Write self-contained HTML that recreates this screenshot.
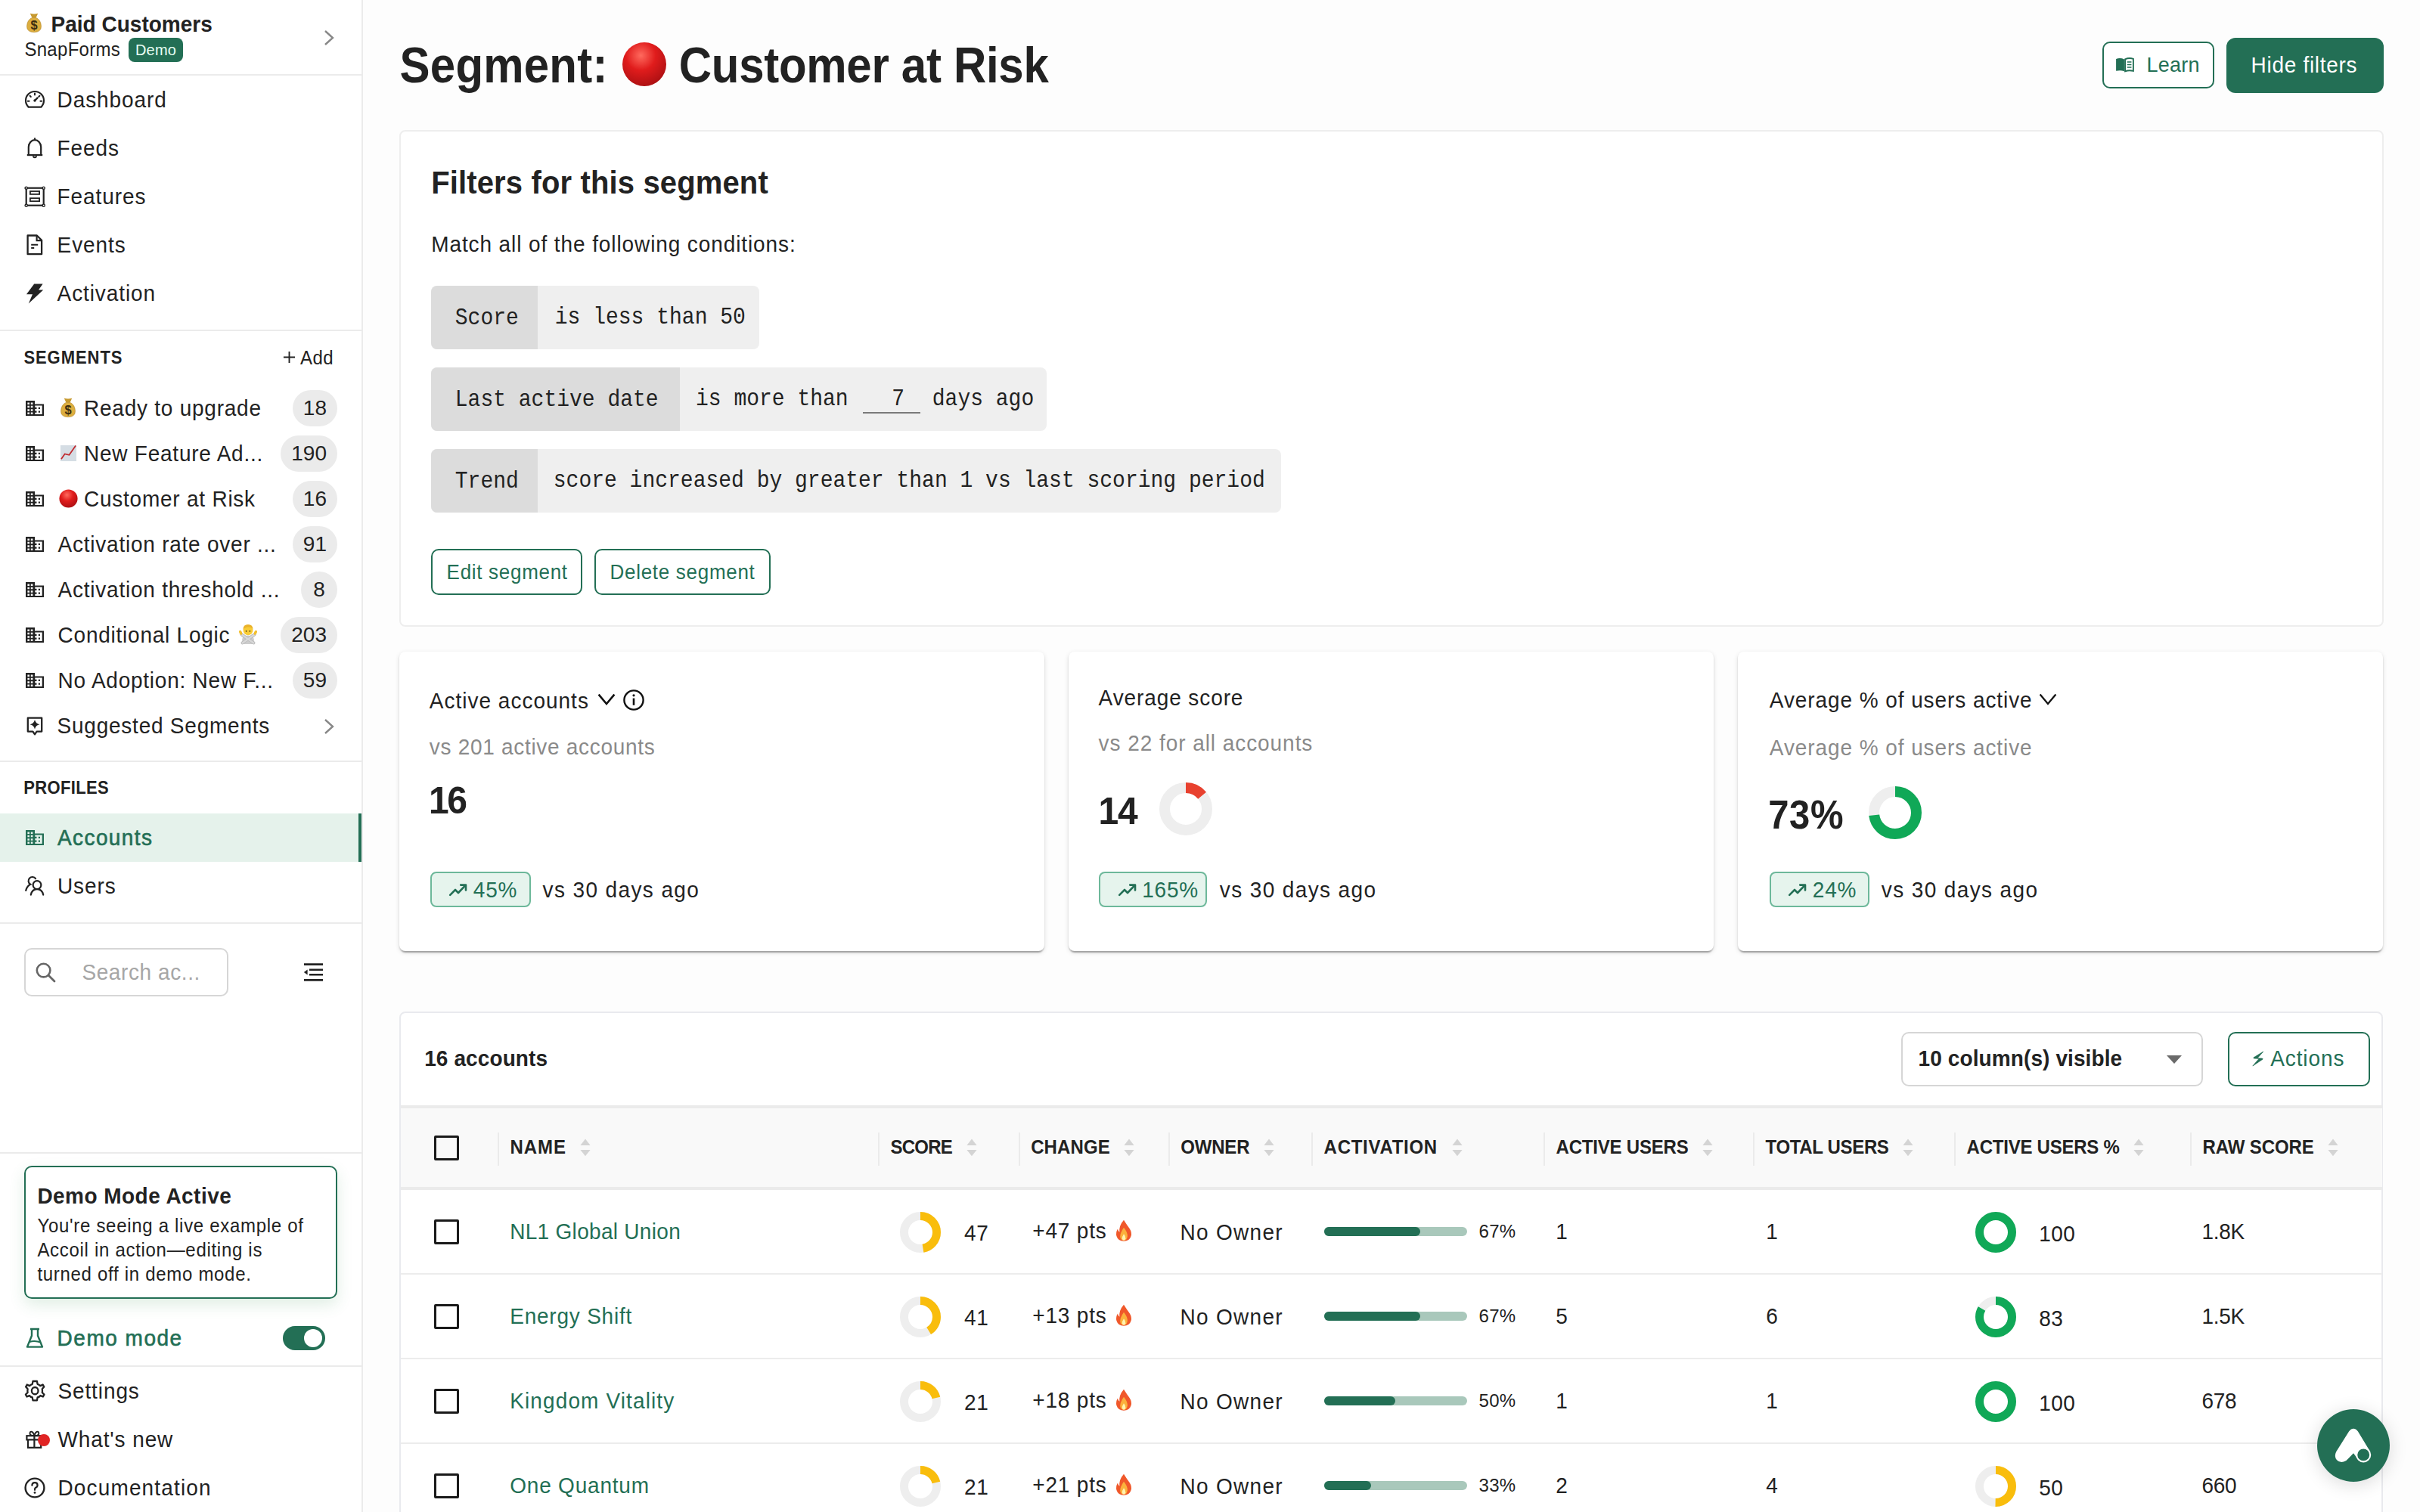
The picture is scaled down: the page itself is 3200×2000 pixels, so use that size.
<!DOCTYPE html>
<html><head><meta charset="utf-8"><title>Segment: Customer at Risk</title>
<style>
*{box-sizing:border-box;margin:0;padding:0}
html{zoom:2}
@media (max-width:2000px){html{zoom:1}}
body{width:1600px;height:1000px;overflow:hidden;position:relative;background:#fdfdfd;font-family:"Liberation Sans",sans-serif;color:#222;}
.t{position:absolute;white-space:nowrap;transform:scaleY(1.05);transform-origin:0 52%}
.b{position:absolute}
.i{position:absolute;overflow:visible}
.mono{font-family:"Liberation Mono",monospace}
</style></head>
<body>
<div class="b" style="left:0;top:0;width:240px;height:1000px;background:#fff;border-right:1px solid #ebebeb"></div>
<svg class="i" style="left:17.6px;top:8.6px;width:10px;height:13px;" viewBox="0 0 10 13"><path d="M2.4 0.4 Q5 1.2 7.6 0.4 L6.3 3.3 H3.7 Z" fill="#c79a30"/><path d="M3.7 3.2 Q0.5 4.6 0.3 8.8 Q0.1 12.7 5 12.8 Q9.9 12.7 9.7 8.8 Q9.5 4.6 6.3 3.2 Z" fill="#dcae3f"/><path d="M3.7 3.2 Q0.5 4.6 0.3 8.8 Q0.1 12.7 5 12.8 Q9.9 12.7 9.7 8.8 Q9.5 4.6 6.3 3.2 Z" fill="none" stroke="#b8892a" stroke-width=".35"/><text x="5" y="10.9" font-size="8.2" text-anchor="middle" font-family="Liberation Sans" font-weight="700" fill="#3b2c10">$</text></svg>
<div class="t" style="left:33.8px;top:6.50px;font-size:14px;line-height:20px;height:20px;font-weight:700;">Paid Customers</div>
<div class="t" style="left:16.2px;top:23.20px;font-size:12px;line-height:20px;height:20px;letter-spacing:0.15px;">SnapForms</div>
<div class="b" style="left:85px;top:25px;width:36px;height:16px;border-radius:4px;background:#236f55;color:#e8fff4;font-size:10px;line-height:16px;text-align:center;letter-spacing:0.1px">Demo</div>
<svg class="i" style="left:214px;top:19.5px;width:7px;height:11px;" viewBox="0 0 7 11"><path d="M1 1l5 4.5L1 10" fill="none" stroke="#888" stroke-width="1.2"/></svg>
<div class="b" style="left:0px;top:49px;width:239px;height:1px;background:#ebebeb"></div>
<svg class="i" style="left:16px;top:59.5px;width:14px;height:13px;" viewBox="0 0 14 13"><path d="M2.82 11.3 A6 6 0 1 1 11.18 11.3 Z" fill="none" stroke="#222" stroke-width="1.1" stroke-linejoin="round"/><path d="M7 7 L8.7 5.3" stroke="#222" stroke-width="1.2" stroke-linecap="round"/><circle cx="7" cy="7" r=".85" fill="#222"/><path d="M7 2.3 V3.2 M3.8 3.9 L4.4 4.5 M10.2 3.9 L9.6 4.5 M2.4 7.4 H3.3 M11.6 7.4 H10.7" stroke="#222" stroke-width="1" stroke-linecap="round"/></svg>
<div class="t" style="left:37.8px;top:56.60px;font-size:14px;line-height:20px;height:20px;letter-spacing:0.45px;">Dashboard</div>
<svg class="i" style="left:16px;top:91px;width:14px;height:14px;" viewBox="0 0 14 14"><path d="M2.9 11.5 V6.3 A4.1 4.7 0 0 1 11.1 6.3 V11.5" fill="none" stroke="#222" stroke-width="1.1"/><path d="M1.9 11.55 H12.1" stroke="#222" stroke-width="1.1"/><path d="M6 12.1 A1 1 0 0 0 8 12.1" fill="none" stroke="#222" stroke-width="1"/><path d="M7 0.2 V1.8" stroke="#222" stroke-width="1.1"/></svg>
<div class="t" style="left:37.8px;top:88.60px;font-size:14px;line-height:20px;height:20px;letter-spacing:0.45px;">Feeds</div>
<svg class="i" style="left:16px;top:123px;width:14px;height:14px;" viewBox="0 0 14 14"><rect x="1.35" y="1.35" width="11.5" height="11.5" fill="none" stroke="#222" stroke-width="1.1"/><rect x="3.95" y="3.5" width="6.1" height="1.95" fill="none" stroke="#222" stroke-width=".9"/><rect x="3.95" y="8.1" width="6.1" height="2" fill="none" stroke="#222" stroke-width=".9"/><g fill="#fff" stroke="#222" stroke-width=".7"><circle cx="1.35" cy="1.35" r=".8"/><circle cx="12.85" cy="1.35" r=".8"/><circle cx="1.35" cy="12.85" r=".8"/><circle cx="12.85" cy="12.85" r=".8"/></g></svg>
<div class="t" style="left:37.8px;top:120.60px;font-size:14px;line-height:20px;height:20px;letter-spacing:0.45px;">Features</div>
<svg class="i" style="left:16px;top:155px;width:14px;height:14px;" viewBox="0 0 14 14"><path d="M2.3 0.75 H8.4 L11.55 3.9 V13.1 H2.3 Z" fill="none" stroke="#222" stroke-width="1.15" stroke-linejoin="round"/><path d="M8.3 0.9 V4.05 H11.4" fill="none" stroke="#222" stroke-width="1.05"/><path d="M4.6 6.9 H9.1 M4.6 9.05 H6.6" stroke="#222" stroke-width="1.0"/></svg>
<div class="t" style="left:37.8px;top:152.60px;font-size:14px;line-height:20px;height:20px;letter-spacing:0.45px;">Events</div>
<svg class="i" style="left:16px;top:187px;width:14px;height:14px;" viewBox="0 0 14 14"><path d="M6.6 0.75 H12.3 L9.5 4.7 H12.6 L2.9 13.7 L5.5 7.6 H1.5 Z" fill="#222"/></svg>
<div class="t" style="left:37.8px;top:184.60px;font-size:14px;line-height:20px;height:20px;letter-spacing:0.45px;">Activation</div>
<div class="b" style="left:0px;top:218px;width:239px;height:1px;background:#ebebeb"></div>
<div class="t" style="left:15.7px;top:227.00px;font-size:11px;line-height:20px;height:20px;font-weight:700;letter-spacing:0.47px;">SEGMENTS</div>
<svg class="i" style="left:187px;top:232px;width:8.5px;height:8.5px;" viewBox="0 0 9 9"><path d="M4.5 0.5V8.5M0.5 4.5H8.5" stroke="#222" stroke-width="1"/></svg>
<div class="t" style="left:198.5px;top:227.00px;font-size:12px;line-height:20px;height:20px;letter-spacing:0.2px;">Add</div>
<svg class="i" style="left:17px;top:265px;width:12px;height:10px;" viewBox="0 0 12 10"><path d="M0 0h6v2.2h6V10H0z M1.2 1.2h1.3v1.25h-1.3z M1.2 3.4h1.3v1.25h-1.3z M1.2 5.6h1.3v1.25h-1.3z M1.2 7.8h1.3v1.25h-1.3z M3.4 1.2h1.3v1.25h-1.3z M3.4 3.4h1.3v1.25h-1.3z M3.4 5.6h1.3v1.25h-1.3z M3.4 7.8h1.3v1.25h-1.3z M6.15 3.2V9h4.7V3.2z M6.15 4.4h1.1v1.1h-1.1z M6.15 6.8h1.1v1.1h-1.1z M8.4 4.4h1.1v1.1h-1.1z M8.4 6.8h1.1v1.1h-1.1z " fill="#222" fill-rule="evenodd"/></svg>
<svg class="i" style="left:40px;top:262.8px;width:10px;height:13px;" viewBox="0 0 10 13"><path d="M2.4 0.4 Q5 1.2 7.6 0.4 L6.3 3.3 H3.7 Z" fill="#c79a30"/><path d="M3.7 3.2 Q0.5 4.6 0.3 8.8 Q0.1 12.7 5 12.8 Q9.9 12.7 9.7 8.8 Q9.5 4.6 6.3 3.2 Z" fill="#dcae3f"/><path d="M3.7 3.2 Q0.5 4.6 0.3 8.8 Q0.1 12.7 5 12.8 Q9.9 12.7 9.7 8.8 Q9.5 4.6 6.3 3.2 Z" fill="none" stroke="#b8892a" stroke-width=".35"/><text x="5" y="10.9" font-size="8.2" text-anchor="middle" font-family="Liberation Sans" font-weight="700" fill="#3b2c10">$</text></svg>
<div class="t" style="left:55.5px;top:260.60px;font-size:14px;line-height:20px;height:20px;letter-spacing:0.38px;">Ready to upgrade</div>
<div class="b" style="right:1377px;top:258px;height:24px;min-width:24px;padding:0 7px;border-radius:12px;background:#ebebeb;font-size:14px;line-height:24px;text-align:center;color:#222">18</div>
<svg class="i" style="left:17px;top:295px;width:12px;height:10px;" viewBox="0 0 12 10"><path d="M0 0h6v2.2h6V10H0z M1.2 1.2h1.3v1.25h-1.3z M1.2 3.4h1.3v1.25h-1.3z M1.2 5.6h1.3v1.25h-1.3z M1.2 7.8h1.3v1.25h-1.3z M3.4 1.2h1.3v1.25h-1.3z M3.4 3.4h1.3v1.25h-1.3z M3.4 5.6h1.3v1.25h-1.3z M3.4 7.8h1.3v1.25h-1.3z M6.15 3.2V9h4.7V3.2z M6.15 4.4h1.1v1.1h-1.1z M6.15 6.8h1.1v1.1h-1.1z M8.4 4.4h1.1v1.1h-1.1z M8.4 6.8h1.1v1.1h-1.1z " fill="#222" fill-rule="evenodd"/></svg>
<svg class="i" style="left:39.5px;top:294px;width:11.5px;height:11.5px;" viewBox="0 0 12 12"><rect x="0.5" y="0.5" width="11" height="11" fill="#d5dde4"/><path d="M1 10 L3.5 6.5 L6.5 7.2 L11 0.8" fill="none" stroke="#c0282d" stroke-width="0.9"/></svg>
<div class="t" style="left:55.5px;top:290.60px;font-size:14px;line-height:20px;height:20px;letter-spacing:0.38px;">New Feature Ad...</div>
<div class="b" style="right:1377px;top:288px;height:24px;min-width:24px;padding:0 7px;border-radius:12px;background:#ebebeb;font-size:14px;line-height:24px;text-align:center;color:#222">190</div>
<svg class="i" style="left:17px;top:325px;width:12px;height:10px;" viewBox="0 0 12 10"><path d="M0 0h6v2.2h6V10H0z M1.2 1.2h1.3v1.25h-1.3z M1.2 3.4h1.3v1.25h-1.3z M1.2 5.6h1.3v1.25h-1.3z M1.2 7.8h1.3v1.25h-1.3z M3.4 1.2h1.3v1.25h-1.3z M3.4 3.4h1.3v1.25h-1.3z M3.4 5.6h1.3v1.25h-1.3z M3.4 7.8h1.3v1.25h-1.3z M6.15 3.2V9h4.7V3.2z M6.15 4.4h1.1v1.1h-1.1z M6.15 6.8h1.1v1.1h-1.1z M8.4 4.4h1.1v1.1h-1.1z M8.4 6.8h1.1v1.1h-1.1z " fill="#222" fill-rule="evenodd"/></svg>
<svg class="i" style="left:39px;top:323.5px;width:12.5px;height:12.5px;" viewBox="0 0 12 12"><defs><radialGradient id="rs" cx="0.42" cy="0.3" r="0.75"><stop offset="0" stop-color="#ff6a5e"/><stop offset="0.45" stop-color="#e01c1c"/><stop offset="1" stop-color="#a80f12"/></radialGradient></defs><circle cx="6" cy="6" r="5.8" fill="url(#rs)"/></svg>
<div class="t" style="left:55.5px;top:320.60px;font-size:14px;line-height:20px;height:20px;letter-spacing:0.38px;">Customer at Risk</div>
<div class="b" style="right:1377px;top:318px;height:24px;min-width:24px;padding:0 7px;border-radius:12px;background:#ebebeb;font-size:14px;line-height:24px;text-align:center;color:#222">16</div>
<svg class="i" style="left:17px;top:355px;width:12px;height:10px;" viewBox="0 0 12 10"><path d="M0 0h6v2.2h6V10H0z M1.2 1.2h1.3v1.25h-1.3z M1.2 3.4h1.3v1.25h-1.3z M1.2 5.6h1.3v1.25h-1.3z M1.2 7.8h1.3v1.25h-1.3z M3.4 1.2h1.3v1.25h-1.3z M3.4 3.4h1.3v1.25h-1.3z M3.4 5.6h1.3v1.25h-1.3z M3.4 7.8h1.3v1.25h-1.3z M6.15 3.2V9h4.7V3.2z M6.15 4.4h1.1v1.1h-1.1z M6.15 6.8h1.1v1.1h-1.1z M8.4 4.4h1.1v1.1h-1.1z M8.4 6.8h1.1v1.1h-1.1z " fill="#222" fill-rule="evenodd"/></svg>
<div class="t" style="left:38.3px;top:350.60px;font-size:14px;line-height:20px;height:20px;letter-spacing:0.38px;">Activation rate over ...</div>
<div class="b" style="right:1377px;top:348px;height:24px;min-width:24px;padding:0 7px;border-radius:12px;background:#ebebeb;font-size:14px;line-height:24px;text-align:center;color:#222">91</div>
<svg class="i" style="left:17px;top:385px;width:12px;height:10px;" viewBox="0 0 12 10"><path d="M0 0h6v2.2h6V10H0z M1.2 1.2h1.3v1.25h-1.3z M1.2 3.4h1.3v1.25h-1.3z M1.2 5.6h1.3v1.25h-1.3z M1.2 7.8h1.3v1.25h-1.3z M3.4 1.2h1.3v1.25h-1.3z M3.4 3.4h1.3v1.25h-1.3z M3.4 5.6h1.3v1.25h-1.3z M3.4 7.8h1.3v1.25h-1.3z M6.15 3.2V9h4.7V3.2z M6.15 4.4h1.1v1.1h-1.1z M6.15 6.8h1.1v1.1h-1.1z M8.4 4.4h1.1v1.1h-1.1z M8.4 6.8h1.1v1.1h-1.1z " fill="#222" fill-rule="evenodd"/></svg>
<div class="t" style="left:38.3px;top:380.60px;font-size:14px;line-height:20px;height:20px;letter-spacing:0.38px;">Activation threshold ...</div>
<div class="b" style="right:1377px;top:378px;height:24px;min-width:24px;padding:0 7px;border-radius:12px;background:#ebebeb;font-size:14px;line-height:24px;text-align:center;color:#222">8</div>
<svg class="i" style="left:17px;top:415px;width:12px;height:10px;" viewBox="0 0 12 10"><path d="M0 0h6v2.2h6V10H0z M1.2 1.2h1.3v1.25h-1.3z M1.2 3.4h1.3v1.25h-1.3z M1.2 5.6h1.3v1.25h-1.3z M1.2 7.8h1.3v1.25h-1.3z M3.4 1.2h1.3v1.25h-1.3z M3.4 3.4h1.3v1.25h-1.3z M3.4 5.6h1.3v1.25h-1.3z M3.4 7.8h1.3v1.25h-1.3z M6.15 3.2V9h4.7V3.2z M6.15 4.4h1.1v1.1h-1.1z M6.15 6.8h1.1v1.1h-1.1z M8.4 4.4h1.1v1.1h-1.1z M8.4 6.8h1.1v1.1h-1.1z " fill="#222" fill-rule="evenodd"/></svg>
<div class="t" style="left:38.3px;top:410.60px;font-size:14px;line-height:20px;height:20px;letter-spacing:0.38px;">Conditional Logic</div>
<svg class="i" style="left:157.5px;top:412.2px;width:13px;height:14px;" viewBox="0 0 13 14"><path d="M2.6 14 V10.8 Q2.8 8.5 6.5 8.3 Q10.2 8.5 10.4 10.8 V14 Z" fill="#cdcdcd"/><path d="M2.2 7.6 L10.2 13.2 M10.8 7.6 L2.8 13.2" stroke="#b9b9b9" stroke-width="2.1" stroke-linecap="round"/><path d="M2.2 7.6 L10.2 13.2 M10.8 7.6 L2.8 13.2" stroke="#d8d8d8" stroke-width="1.2" stroke-linecap="round"/><ellipse cx="1.6" cy="6.4" rx=".9" ry="1.6" transform="rotate(-25 1.6 6.4)" fill="#f3bf2c"/><ellipse cx="11.4" cy="6.4" rx=".9" ry="1.6" transform="rotate(25 11.4 6.4)" fill="#f3bf2c"/><circle cx="6.5" cy="4.9" r="3.2" fill="#f8cc36"/><path d="M3.2 4.6 Q3.2 1 6.5 1 Q9.8 1 9.8 4.6 Q9 2.6 6.8 2.8 Q4.4 2.6 3.2 4.6z" fill="#eab22a"/><circle cx="5.3" cy="5.4" r=".42" fill="#3a2a10"/><circle cx="7.7" cy="5.4" r=".42" fill="#3a2a10"/></svg>
<div class="b" style="right:1377px;top:408px;height:24px;min-width:24px;padding:0 7px;border-radius:12px;background:#ebebeb;font-size:14px;line-height:24px;text-align:center;color:#222">203</div>
<svg class="i" style="left:17px;top:445px;width:12px;height:10px;" viewBox="0 0 12 10"><path d="M0 0h6v2.2h6V10H0z M1.2 1.2h1.3v1.25h-1.3z M1.2 3.4h1.3v1.25h-1.3z M1.2 5.6h1.3v1.25h-1.3z M1.2 7.8h1.3v1.25h-1.3z M3.4 1.2h1.3v1.25h-1.3z M3.4 3.4h1.3v1.25h-1.3z M3.4 5.6h1.3v1.25h-1.3z M3.4 7.8h1.3v1.25h-1.3z M6.15 3.2V9h4.7V3.2z M6.15 4.4h1.1v1.1h-1.1z M6.15 6.8h1.1v1.1h-1.1z M8.4 4.4h1.1v1.1h-1.1z M8.4 6.8h1.1v1.1h-1.1z " fill="#222" fill-rule="evenodd"/></svg>
<div class="t" style="left:38.3px;top:440.60px;font-size:14px;line-height:20px;height:20px;letter-spacing:0.38px;">No Adoption: New F...</div>
<div class="b" style="right:1377px;top:438px;height:24px;min-width:24px;padding:0 7px;border-radius:12px;background:#ebebeb;font-size:14px;line-height:24px;text-align:center;color:#222">59</div>
<svg class="i" style="left:17px;top:473.5px;width:12px;height:13px;" viewBox="0 0 12 13"><path d="M1.4 1.35 H10.6 V10.3 H7.3 L6 12.2 L4.7 10.3 H1.4 Z" fill="none" stroke="#222" stroke-width="1.15" stroke-linejoin="round"/><path d="M6 2.45 Q6.55 5.05 9.25 5.6 Q6.55 6.15 6 8.75 Q5.45 6.15 2.75 5.6 Q5.45 5.05 6 2.45z" fill="#222"/></svg>
<div class="t" style="left:37.8px;top:470.60px;font-size:14px;line-height:20px;height:20px;letter-spacing:0.38px;">Suggested Segments</div>
<svg class="i" style="left:214px;top:475px;width:7px;height:11px;" viewBox="0 0 7 11"><path d="M1 1l5 4.5L1 10" fill="none" stroke="#888" stroke-width="1.2"/></svg>
<div class="b" style="left:0px;top:503px;width:239px;height:1px;background:#ebebeb"></div>
<div class="t" style="left:15.6px;top:511.70px;font-size:11px;line-height:20px;height:20px;font-weight:700;letter-spacing:0.18px;">PROFILES</div>
<div class="b" style="left:0px;top:538px;width:237px;height:32px;background:#e5f2eb"></div>
<div class="b" style="left:237px;top:538px;width:2px;height:32px;background:#236f55"></div>
<svg class="i" style="left:17px;top:549px;width:12px;height:10px;" viewBox="0 0 12 10"><path d="M0 0h6v2.2h6V10H0z M1.2 1.2h1.3v1.25h-1.3z M1.2 3.4h1.3v1.25h-1.3z M1.2 5.6h1.3v1.25h-1.3z M1.2 7.8h1.3v1.25h-1.3z M3.4 1.2h1.3v1.25h-1.3z M3.4 3.4h1.3v1.25h-1.3z M3.4 5.6h1.3v1.25h-1.3z M3.4 7.8h1.3v1.25h-1.3z M6.15 3.2V9h4.7V3.2z M6.15 4.4h1.1v1.1h-1.1z M6.15 6.8h1.1v1.1h-1.1z M8.4 4.4h1.1v1.1h-1.1z M8.4 6.8h1.1v1.1h-1.1z " fill="#236f55" fill-rule="evenodd"/></svg>
<div class="t" style="left:38.0px;top:544.60px;font-size:14px;line-height:20px;height:20px;color:#236f55;letter-spacing:0.7px;-webkit-text-stroke:0.3px #236f55;">Accounts</div>
<svg class="i" style="left:16px;top:579px;width:14px;height:14px;" viewBox="0 0 14 14"><circle cx="8.5" cy="6.3" r="2.7" fill="none" stroke="#222" stroke-width="1.1"/><path d="M4.4 12.8 Q5.2 9.1 8.5 9.1 Q11.8 9.1 12.6 12.8" fill="none" stroke="#222" stroke-width="1.1" stroke-linecap="round"/><path d="M7.53 2.11 A2.6 2.6 0 1 0 4.1 5.85 Q1.8 7 1.1 10" fill="none" stroke="#222" stroke-width="1.1" stroke-linecap="round"/></svg>
<div class="t" style="left:38.0px;top:576.60px;font-size:14px;line-height:20px;height:20px;letter-spacing:0.45px;">Users</div>
<div class="b" style="left:0px;top:610px;width:239px;height:1px;background:#ebebeb"></div>
<div class="b" style="left:16px;top:627px;width:135px;height:32px;border:1px solid #d6d6d6;border-radius:5px;background:#fff"></div>
<svg class="i" style="left:23px;top:636px;width:14px;height:14px;" viewBox="0 0 14 14"><circle cx="5.8" cy="5.8" r="4.4" fill="none" stroke="#666" stroke-width="1.3"/><path d="M9 9 L13 13" stroke="#666" stroke-width="1.4" stroke-linecap="round"/></svg>
<div class="t" style="left:54.2px;top:633.60px;font-size:14px;line-height:20px;height:20px;color:#a6a6a6;letter-spacing:0.3px;">Search ac...</div>
<svg class="i" style="left:200.5px;top:637px;width:13px;height:12px;" viewBox="0 0 13 12"><path d="M0.5 0.8H13M4 4.4H13M4 7.6H13M0.5 11.2H13" stroke="#222" stroke-width="1.3"/><path d="M0.4 6 L2.8 4.3 V7.7Z" fill="#222"/></svg>
<div class="b" style="left:0px;top:762px;width:239px;height:1px;background:#ebebeb"></div>
<div class="b" style="left:16px;top:771px;width:207px;height:88px;border:1px solid #236f55;border-radius:5px;background:#fff;box-shadow:0 4px 10px rgba(60,150,90,0.16)"></div>
<div class="t" style="left:24.7px;top:781.60px;font-size:14px;line-height:20px;height:20px;font-weight:700;letter-spacing:0.23px;">Demo Mode Active</div>
<div class="t" style="left:24.7px;top:801.10px;font-size:12px;line-height:20px;height:20px;letter-spacing:0.35px;">You're seeing a live example of</div>
<div class="t" style="left:24.7px;top:817.10px;font-size:12px;line-height:20px;height:20px;letter-spacing:0.35px;">Accoil in action—editing is</div>
<div class="t" style="left:24.7px;top:832.80px;font-size:12px;line-height:20px;height:20px;letter-spacing:0.35px;">turned off in demo mode.</div>
<svg class="i" style="left:17px;top:878px;width:12px;height:14px;" viewBox="0 0 12 14"><path d="M4 1 V5.4 L1 12.8 H11 L8 5.4 V1 M3 1 H9" fill="none" stroke="#236f55" stroke-width="1.2" stroke-linejoin="round"/><path d="M2.2 9.6 Q6 8.2 9.8 9.8" fill="none" stroke="#236f55" stroke-width="1"/></svg>
<div class="t" style="left:37.8px;top:875.60px;font-size:14px;line-height:20px;height:20px;color:#236f55;letter-spacing:0.75px;-webkit-text-stroke:0.3px #236f55;">Demo mode</div>
<div class="b" style="left:187px;top:877px;width:28px;height:16px;border-radius:8px;background:#236f55"></div>
<div class="b" style="left:201px;top:879px;width:12px;height:12px;border-radius:6px;background:#fff"></div>
<div class="b" style="left:0px;top:903px;width:239px;height:1px;background:#ebebeb"></div>
<svg class="i" style="left:16.5px;top:913px;width:13.2px;height:13.8px" viewBox="1.2 0.5 11.6 11.3" preserveAspectRatio="none"><path d="M7 0.9 L8.2 0.9 L8.5 2.5 Q9.4 2.8 10.1 3.4 L11.6 2.8 L12.3 3.9 L11.2 5.1 Q11.4 6 11.2 7 L12.4 8.1 L11.7 9.3 L10.2 8.7 Q9.5 9.4 8.5 9.7 L8.2 11.3 H5.8 L5.5 9.7 Q4.5 9.4 3.8 8.7 L2.3 9.3 L1.6 8.1 L2.8 7 Q2.6 6 2.8 5.1 L1.7 3.9 L2.4 2.8 L3.9 3.4 Q4.6 2.8 5.5 2.5 L5.8 0.9 Z" fill="none" stroke="#222" stroke-width="1.0" stroke-linejoin="round"/><circle cx="7" cy="6.1" r="1.9" fill="none" stroke="#222" stroke-width="1.0"/></svg>
<div class="t" style="left:38.2px;top:910.60px;font-size:14px;line-height:20px;height:20px;letter-spacing:0.45px;">Settings</div>
<svg class="i" style="left:16.5px;top:945px;width:14px;height:13px;" viewBox="0 0 14 13"><rect x="1.2" y="4.6" width="10" height="2.6" fill="none" stroke="#222" stroke-width="1.1"/><path d="M2 7.2 V12.4 H10.6 V7.2 M6.2 4.6 V12.4" fill="none" stroke="#222" stroke-width="1.1"/><path d="M6.2 4.5 C3.6 4.6 3 3.6 3.3 2.6 C3.6 1.4 5.4 1.4 6.2 4.5 C7 1.4 8.8 1.4 9.1 2.6 C9.4 3.6 8.8 4.6 6.2 4.5" fill="none" stroke="#222" stroke-width="1"/></svg>
<div class="b" style="left:25px;top:948.5px;width:8px;height:8px;border-radius:4px;background:#e02424"></div>
<div class="t" style="left:38.2px;top:942.60px;font-size:14px;line-height:20px;height:20px;letter-spacing:0.45px;">What's new</div>
<svg class="i" style="left:16px;top:977px;width:14px;height:14px;" viewBox="0 0 14 14"><circle cx="7" cy="7" r="6.2" fill="none" stroke="#222" stroke-width="1.2"/><path d="M5.2 5.4 Q5.2 3.6 7 3.6 Q8.8 3.6 8.8 5.2 Q8.8 6.4 7.4 7 Q7 7.2 7 8.4" fill="none" stroke="#222" stroke-width="1.1" stroke-linecap="round"/><circle cx="7" cy="10.2" r=".7" fill="#222"/></svg>
<div class="t" style="left:38.2px;top:974.60px;font-size:14px;line-height:20px;height:20px;letter-spacing:0.58px;">Documentation</div>

<div class="t" style="left:264.3px;top:33.60px;font-size:30px;line-height:20px;height:20px;font-weight:700;letter-spacing:0.1px;transform:scaleY(1.1);transform-origin:0 50%;">Segment:</div>
<svg class="i" style="left:411px;top:27.6px;width:30px;height:30px;" viewBox="0 0 12 12"><defs><radialGradient id="rt" cx="0.42" cy="0.3" r="0.75"><stop offset="0" stop-color="#ff6a5e"/><stop offset="0.45" stop-color="#e01c1c"/><stop offset="1" stop-color="#a80f12"/></radialGradient></defs><circle cx="6" cy="6" r="5.8" fill="url(#rt)"/></svg>
<div class="t" style="left:448.9px;top:33.60px;font-size:30px;line-height:20px;height:20px;font-weight:700;letter-spacing:-0.15px;transform:scaleY(1.1);transform-origin:0 50%;">Customer at Risk</div>
<div class="b" style="left:1390px;top:27.6px;width:74px;height:31px;border:1px solid #236f55;border-radius:5px;background:#fff"></div>
<svg class="i" style="left:1398.5px;top:38px;width:12.5px;height:9.5px;" viewBox="0 0 13 10"><path d="M0.5 1 Q3.5 0 6.2 1.3 V9.6 Q3.5 8.6 0.5 9.4 Z" fill="#236f55"/><path d="M6.8 1.3 Q9.5 0 12.5 1 V9.4 Q9.5 8.6 6.8 9.6 Z" fill="none" stroke="#236f55" stroke-width="1"/><path d="M8.2 3.2 H11.2 M8.2 5 H11.2 M8.2 6.8 H11.2" stroke="#236f55" stroke-width=".8"/></svg>
<div class="t" style="left:1419.3px;top:33.20px;font-size:13.5px;line-height:20px;height:20px;color:#236f55;letter-spacing:0.1px;">Learn</div>
<div class="b" style="left:1472px;top:25px;width:104px;height:36.5px;border-radius:6px;background:#236f55"></div>
<div class="t" style="left:1488.3px;top:33.40px;font-size:14px;line-height:20px;height:20px;color:#fff;letter-spacing:0.35px;">Hide filters</div>
<div class="b" style="left:264px;top:86px;width:1312px;height:328.5px;border:1px solid #eeeeee;border-radius:4px;background:#fff"></div>
<div class="t" style="left:285.1px;top:110.70px;font-size:20px;line-height:20px;height:20px;font-weight:700;letter-spacing:0.07px;">Filters for this segment</div>
<div class="t" style="left:285.1px;top:152.10px;font-size:14px;line-height:20px;height:20px;letter-spacing:0.45px;">Match all of the following conditions:</div>
<div class="b" style="left:285px;top:189px;width:217px;height:42px;border-radius:4px;background:#efefef;overflow:hidden"><div class="b" style="left:0;top:0;width:70.6px;height:42px;background:#dcdcdc"></div></div>
<div class="t" style="left:300.9px;top:200.50px;font-size:14px;line-height:20px;height:20px;font-family:'Liberation Mono',monospace;transform:scaleY(1.13);transform-origin:0 55%;">Score</div>
<div class="t" style="left:366.90000000000003px;top:200.00px;font-size:14px;line-height:20px;height:20px;font-family:'Liberation Mono',monospace;transform:scaleY(1.13);transform-origin:0 55%;">is less than 50</div>
<div class="b" style="left:285px;top:243px;width:407px;height:42px;border-radius:4px;background:#efefef;overflow:hidden"><div class="b" style="left:0;top:0;width:164.6px;height:42px;background:#dcdcdc"></div></div>
<div class="t" style="left:300.9px;top:254.50px;font-size:14px;line-height:20px;height:20px;font-family:'Liberation Mono',monospace;transform:scaleY(1.13);transform-origin:0 55%;">Last active date</div>
<div class="t" style="left:460.0px;top:254.00px;font-size:14px;line-height:20px;height:20px;font-family:'Liberation Mono',monospace;transform:scaleY(1.13);transform-origin:0 55%;">is more than</div>
<div class="t" style="left:616.4px;top:254.00px;font-size:14px;line-height:20px;height:20px;font-family:'Liberation Mono',monospace;transform:scaleY(1.13);transform-origin:0 55%;">days ago</div>
<div class="b" style="left:285px;top:297px;width:562px;height:42px;border-radius:4px;background:#efefef;overflow:hidden"><div class="b" style="left:0;top:0;width:70.6px;height:42px;background:#dcdcdc"></div></div>
<div class="t" style="left:300.9px;top:308.50px;font-size:14px;line-height:20px;height:20px;font-family:'Liberation Mono',monospace;transform:scaleY(1.13);transform-origin:0 55%;">Trend</div>
<div class="t" style="left:365.90000000000003px;top:308.00px;font-size:14px;line-height:20px;height:20px;font-family:'Liberation Mono',monospace;transform:scaleY(1.13);transform-origin:0 55%;">score increased by greater than 1 vs last scoring period</div>
<div class="b" style="left:570.5px;top:272.7px;width:38px;height:1px;background:#7a7a7a"></div>
<div class="t" style="left:589.6px;top:254.00px;font-size:14px;line-height:20px;height:20px;font-family:'Liberation Mono',monospace;transform:scaleY(1.13);transform-origin:0 55%;">7</div>
<div class="b" style="left:285px;top:363px;width:100px;height:30.5px;border:1px solid #236f55;border-radius:5px"></div>
<div class="t" style="left:295.3px;top:368.70px;font-size:13px;line-height:20px;height:20px;color:#236f55;letter-spacing:0.35px;">Edit segment</div>
<div class="b" style="left:393px;top:363px;width:116.5px;height:30.5px;border:1px solid #236f55;border-radius:5px"></div>
<div class="t" style="left:403.3px;top:368.70px;font-size:13px;line-height:20px;height:20px;color:#236f55;letter-spacing:0.35px;">Delete segment</div>
<div class="b" style="left:264px;top:431px;width:426.5px;height:198px;border-radius:4px;background:#fff;box-shadow:0px 2px 1px -1px rgba(0,0,0,0.2),0px 1px 1px 0px rgba(0,0,0,0.14),0px 1px 3px 0px rgba(0,0,0,0.12)"></div>
<div class="b" style="left:706.3px;top:431px;width:426.5px;height:198px;border-radius:4px;background:#fff;box-shadow:0px 2px 1px -1px rgba(0,0,0,0.2),0px 1px 1px 0px rgba(0,0,0,0.14),0px 1px 3px 0px rgba(0,0,0,0.12)"></div>
<div class="b" style="left:1149px;top:431px;width:426.5px;height:198px;border-radius:4px;background:#fff;box-shadow:0px 2px 1px -1px rgba(0,0,0,0.2),0px 1px 1px 0px rgba(0,0,0,0.14),0px 1px 3px 0px rgba(0,0,0,0.12)"></div>
<div class="t" style="left:283.9px;top:453.80px;font-size:14px;line-height:20px;height:20px;letter-spacing:0.5px;">Active accounts</div>
<svg class="i" style="left:395px;top:458.5px;width:12px;height:8px;" viewBox="0 0 12 8"><path d="M0.8 0.8 L6 7 L11.2 0.8" fill="none" stroke="#111" stroke-width="1.3"/></svg>
<svg class="i" style="left:412px;top:456px;width:14px;height:14px;" viewBox="0 0 14 14"><circle cx="7" cy="7" r="6.3" fill="none" stroke="#111" stroke-width="1.2"/><path d="M7 5.8 V10.4" stroke="#111" stroke-width="1.3"/><circle cx="7" cy="3.9" r=".8" fill="#111"/></svg>
<div class="t" style="left:283.9px;top:484.60px;font-size:14px;line-height:20px;height:20px;color:#8a8a8a;letter-spacing:0.35px;">vs 201 active accounts</div>
<div class="t" style="left:283.5px;top:514.60px;font-size:24px;line-height:30px;height:30px;font-weight:700;letter-spacing:-1.2px;transform:scaleY(1.06);transform-origin:0 50%;">16</div>
<div class="t" style="left:726.3px;top:452.00px;font-size:14px;line-height:20px;height:20px;letter-spacing:0.45px;">Average score</div>
<div class="t" style="left:726.3px;top:481.90px;font-size:14px;line-height:20px;height:20px;color:#8a8a8a;letter-spacing:0.47px;">vs 22 for all accounts</div>
<div class="t" style="left:726.3px;top:521.70px;font-size:24px;line-height:30px;height:30px;font-weight:700;letter-spacing:-0.6px;transform:scaleY(1.06);transform-origin:0 50%;">14</div>
<svg class="i" style="left:766.7px;top:517.7px;width:35px;height:35px;" viewBox="0 0 35 35"><circle cx="17.5" cy="17.5" r="14.0" fill="none" stroke="#eeeeee" stroke-width="7"/><circle cx="17.5" cy="17.5" r="14.0" fill="none" stroke="#e8412f" stroke-width="7" stroke-dasharray="12.315 87.965" transform="rotate(-90 17.5 17.5)"/></svg>
<div class="t" style="left:1169.9px;top:453.70px;font-size:14px;line-height:20px;height:20px;letter-spacing:0.46px;">Average % of users active</div>
<svg class="i" style="left:1348px;top:458.5px;width:12px;height:8px;" viewBox="0 0 12 8"><path d="M0.8 0.8 L6 7 L11.2 0.8" fill="none" stroke="#111" stroke-width="1.15"/></svg>
<div class="t" style="left:1169.9px;top:484.80px;font-size:14px;line-height:20px;height:20px;color:#8a8a8a;letter-spacing:0.46px;">Average % of users active</div>
<div class="t" style="left:1169.1px;top:524.00px;font-size:24.5px;line-height:30px;height:30px;font-weight:700;letter-spacing:0.3px;transform:scaleY(1.08);transform-origin:0 50%;">73%</div>
<svg class="i" style="left:1235.7px;top:520px;width:35px;height:35px;" viewBox="0 0 35 35"><circle cx="17.5" cy="17.5" r="14.0" fill="none" stroke="#eeeeee" stroke-width="7"/><circle cx="17.5" cy="17.5" r="14.0" fill="none" stroke="#10a857" stroke-width="7" stroke-dasharray="64.214 87.965" transform="rotate(-90 17.5 17.5)"/></svg>
<div class="b" style="left:284.4px;top:576.6px;width:66.5px;height:23.6px;border:1px solid #6db89a;border-radius:4px;background:#e6f4ed"></div>
<svg class="i" style="left:297.2px;top:584.5px;width:12px;height:8px;" viewBox="0 0 12 8"><path d="M0.6 7.4 L4 4 L6 6 L10.6 1.2" fill="none" stroke="#236f55" stroke-width="1.3" stroke-linecap="round" stroke-linejoin="round"/><path d="M7.6 0.8 H11 V4.2" fill="none" stroke="#236f55" stroke-width="1.3" stroke-linecap="round" stroke-linejoin="round"/></svg>
<div class="t" style="left:312.9px;top:579.20px;font-size:14px;line-height:20px;height:20px;color:#236f55;letter-spacing:0.4px;">45%</div>
<div class="t" style="left:358.8px;top:579.20px;font-size:14px;line-height:20px;height:20px;letter-spacing:0.69px;">vs 30 days ago</div>
<div class="b" style="left:726.6px;top:576.6px;width:71.6px;height:23.6px;border:1px solid #6db89a;border-radius:4px;background:#e6f4ed"></div>
<svg class="i" style="left:739.4px;top:584.5px;width:12px;height:8px;" viewBox="0 0 12 8"><path d="M0.6 7.4 L4 4 L6 6 L10.6 1.2" fill="none" stroke="#236f55" stroke-width="1.3" stroke-linecap="round" stroke-linejoin="round"/><path d="M7.6 0.8 H11 V4.2" fill="none" stroke="#236f55" stroke-width="1.3" stroke-linecap="round" stroke-linejoin="round"/></svg>
<div class="t" style="left:755.1px;top:579.20px;font-size:14px;line-height:20px;height:20px;color:#236f55;letter-spacing:0.4px;">165%</div>
<div class="t" style="left:806.4px;top:579.20px;font-size:14px;line-height:20px;height:20px;letter-spacing:0.69px;">vs 30 days ago</div>
<div class="b" style="left:1169.9px;top:576.6px;width:66px;height:23.6px;border:1px solid #6db89a;border-radius:4px;background:#e6f4ed"></div>
<svg class="i" style="left:1182.7px;top:584.5px;width:12px;height:8px;" viewBox="0 0 12 8"><path d="M0.6 7.4 L4 4 L6 6 L10.6 1.2" fill="none" stroke="#236f55" stroke-width="1.3" stroke-linecap="round" stroke-linejoin="round"/><path d="M7.6 0.8 H11 V4.2" fill="none" stroke="#236f55" stroke-width="1.3" stroke-linecap="round" stroke-linejoin="round"/></svg>
<div class="t" style="left:1198.4px;top:579.20px;font-size:14px;line-height:20px;height:20px;color:#236f55;letter-spacing:0.4px;">24%</div>
<div class="t" style="left:1243.9px;top:579.20px;font-size:14px;line-height:20px;height:20px;letter-spacing:0.69px;">vs 30 days ago</div>

<div class="b" style="left:264px;top:669px;width:1311.5px;height:400px;border:1px solid #e9eaee;border-radius:4px;background:#fff"></div>
<div class="t" style="left:280.6px;top:690.60px;font-size:14px;line-height:20px;height:20px;font-weight:700;letter-spacing:0.05px;">16 accounts</div>
<div class="b" style="left:1256.8px;top:682.4px;width:199.5px;height:36.2px;border:1px solid #d6d6d6;border-radius:5px;background:#fff"></div>
<div class="t" style="left:1268.3px;top:690.40px;font-size:14px;line-height:20px;height:20px;font-weight:700;letter-spacing:0.05px;">10 column(s) visible</div>
<svg class="i" style="left:1432.5px;top:698px;width:10px;height:5.5px;" viewBox="0 0 10 5.5"><path d="M0 0 H10 L5 5.5Z" fill="#6a6a6a"/></svg>
<div class="b" style="left:1472.8px;top:682.4px;width:94px;height:36px;border:1px solid #236f55;border-radius:5px;background:#fff"></div>
<svg class="i" style="left:1489px;top:695px;width:8px;height:10.5px;" viewBox="0 0 8 10.5"><path d="M7.4 0.5 L0.9 4.5 L1.2 5 L4.6 5.15 L0.4 10 L7.1 5.5 L6.8 5.05 L3.5 4.85 Z" fill="#236f55" stroke="#236f55" stroke-width=".35" stroke-linejoin="round"/></svg>
<div class="t" style="left:1501.1px;top:690.40px;font-size:14px;line-height:20px;height:20px;color:#236f55;letter-spacing:0.45px;">Actions</div>
<div class="b" style="left:265px;top:731px;width:1310px;height:2px;background:#ebebeb"></div>
<div class="b" style="left:265px;top:733px;width:1310px;height:52px;background:#f9f9f9"></div>
<div class="b" style="left:265px;top:785px;width:1310px;height:2px;background:#ebebeb"></div>
<div class="b" style="left:287px;top:751px;width:16.3px;height:16.3px;border:1.6px solid #1a1a1a;border-radius:1px"></div>
<div class="b" style="left:329px;top:749px;width:1px;height:22px;background:#ebebeb"></div>
<div class="t" style="left:337.3px;top:749px;height:20px;line-height:20px;font-size:12px;font-weight:700;display:flex;align-items:center;gap:9.3px;letter-spacing:0.45px">NAME<svg style="width:7px;height:12px;margin-top:0px" viewBox="0 0 7 12"><path d="M3.5 0.6 L6.8 4.6 H0.2Z M3.5 11.4 L6.8 7.4 H0.2Z" fill="#d4d4d4"/></svg></div>
<div class="b" style="left:580.5px;top:749px;width:1px;height:22px;background:#ebebeb"></div>
<div class="t" style="left:588.8px;top:749px;height:20px;line-height:20px;font-size:12px;font-weight:700;display:flex;align-items:center;gap:9.3px;letter-spacing:-0.39px">SCORE<svg style="width:7px;height:12px;margin-top:0px" viewBox="0 0 7 12"><path d="M3.5 0.6 L6.8 4.6 H0.2Z M3.5 11.4 L6.8 7.4 H0.2Z" fill="#d4d4d4"/></svg></div>
<div class="b" style="left:673.3px;top:749px;width:1px;height:22px;background:#ebebeb"></div>
<div class="t" style="left:681.5999999999999px;top:749px;height:20px;line-height:20px;font-size:12px;font-weight:700;display:flex;align-items:center;gap:9.3px;letter-spacing:0.05px">CHANGE<svg style="width:7px;height:12px;margin-top:0px" viewBox="0 0 7 12"><path d="M3.5 0.6 L6.8 4.6 H0.2Z M3.5 11.4 L6.8 7.4 H0.2Z" fill="#d4d4d4"/></svg></div>
<div class="b" style="left:772.3px;top:749px;width:1px;height:22px;background:#ebebeb"></div>
<div class="t" style="left:780.5999999999999px;top:749px;height:20px;line-height:20px;font-size:12px;font-weight:700;display:flex;align-items:center;gap:9.3px;letter-spacing:-0.09px">OWNER<svg style="width:7px;height:12px;margin-top:0px" viewBox="0 0 7 12"><path d="M3.5 0.6 L6.8 4.6 H0.2Z M3.5 11.4 L6.8 7.4 H0.2Z" fill="#d4d4d4"/></svg></div>
<div class="b" style="left:867px;top:749px;width:1px;height:22px;background:#ebebeb"></div>
<div class="t" style="left:875.3px;top:749px;height:20px;line-height:20px;font-size:12px;font-weight:700;display:flex;align-items:center;gap:9.3px;letter-spacing:0.36px">ACTIVATION<svg style="width:7px;height:12px;margin-top:0px" viewBox="0 0 7 12"><path d="M3.5 0.6 L6.8 4.6 H0.2Z M3.5 11.4 L6.8 7.4 H0.2Z" fill="#d4d4d4"/></svg></div>
<div class="b" style="left:1020.5px;top:749px;width:1px;height:22px;background:#ebebeb"></div>
<div class="t" style="left:1028.8px;top:749px;height:20px;line-height:20px;font-size:12px;font-weight:700;display:flex;align-items:center;gap:9.3px;letter-spacing:-0.1px">ACTIVE USERS<svg style="width:7px;height:12px;margin-top:0px" viewBox="0 0 7 12"><path d="M3.5 0.6 L6.8 4.6 H0.2Z M3.5 11.4 L6.8 7.4 H0.2Z" fill="#d4d4d4"/></svg></div>
<div class="b" style="left:1159px;top:749px;width:1px;height:22px;background:#ebebeb"></div>
<div class="t" style="left:1167.3px;top:749px;height:20px;line-height:20px;font-size:12px;font-weight:700;display:flex;align-items:center;gap:9.3px;letter-spacing:-0.17px">TOTAL USERS<svg style="width:7px;height:12px;margin-top:0px" viewBox="0 0 7 12"><path d="M3.5 0.6 L6.8 4.6 H0.2Z M3.5 11.4 L6.8 7.4 H0.2Z" fill="#d4d4d4"/></svg></div>
<div class="b" style="left:1292px;top:749px;width:1px;height:22px;background:#ebebeb"></div>
<div class="t" style="left:1300.3px;top:749px;height:20px;line-height:20px;font-size:12px;font-weight:700;display:flex;align-items:center;gap:9.3px;letter-spacing:-0.12px">ACTIVE USERS %<svg style="width:7px;height:12px;margin-top:0px" viewBox="0 0 7 12"><path d="M3.5 0.6 L6.8 4.6 H0.2Z M3.5 11.4 L6.8 7.4 H0.2Z" fill="#d4d4d4"/></svg></div>
<div class="b" style="left:1448px;top:749px;width:1px;height:22px;background:#ebebeb"></div>
<div class="t" style="left:1456.3px;top:749px;height:20px;line-height:20px;font-size:12px;font-weight:700;display:flex;align-items:center;gap:9.3px;letter-spacing:-0.05px">RAW SCORE<svg style="width:7px;height:12px;margin-top:0px" viewBox="0 0 7 12"><path d="M3.5 0.6 L6.8 4.6 H0.2Z M3.5 11.4 L6.8 7.4 H0.2Z" fill="#d4d4d4"/></svg></div>
<div class="b" style="left:265px;top:842px;width:1310px;height:1px;background:#ececec"></div>
<div class="b" style="left:287px;top:806.7px;width:16.3px;height:16.3px;border:1.6px solid #1a1a1a;border-radius:1px"></div>
<div class="t" style="left:337.1px;top:804.90px;font-size:14px;line-height:20px;height:20px;color:#236f55;letter-spacing:0.15px;">NL1 Global Union</div>
<svg class="i" style="left:595px;top:801.5px;width:27px;height:27px;" viewBox="0 0 27 27"><circle cx="13.5" cy="13.5" r="10.75" fill="none" stroke="#eeeeee" stroke-width="5.5"/><circle cx="13.5" cy="13.5" r="10.75" fill="none" stroke="#f9bd0c" stroke-width="5.5" stroke-dasharray="31.746 67.544" transform="rotate(-90 13.5 13.5)"/></svg>
<div class="t" style="left:637.5px;top:806.20px;font-size:14px;line-height:20px;height:20px;letter-spacing:0.3px;">47</div>
<div class="t" style="left:682.6px;top:804.60px;font-size:14px;line-height:20px;height:20px;letter-spacing:0.42px;">+47 pts</div>
<svg class="i" style="left:737px;top:806.3px;width:12px;height:14.399999999999999px" viewBox="0 0 12 12" preserveAspectRatio="none"><path d="M6 0.3 Q8 3 9.8 5 Q11.5 7.2 10.8 9.2 Q9.8 12 6 12 Q2.2 12 1.2 9.2 Q0.6 7 2 5.2 Q2.2 6.6 3.2 7 Q2.6 3.6 6 0.3z" fill="#f0582a"/><path d="M6 4.5 Q8.6 7.2 8.4 9.3 Q8 11.6 6 11.6 Q4 11.6 3.6 9.6 Q3.5 7.6 6 4.5z" fill="#fbb13c"/><path d="M6 8 Q7.4 9.4 7.2 10.5 Q6.8 11.6 6 11.6 Q5.2 11.6 4.9 10.6 Q4.8 9.5 6 8z" fill="#fff3b0"/></svg>
<div class="t" style="left:780.3px;top:805.70px;font-size:14px;line-height:20px;height:20px;letter-spacing:0.64px;">No Owner</div>
<div class="b" style="left:875.4px;top:811.5px;width:94.6px;height:6px;border-radius:3px;background:#a9c8bb"></div>
<div class="b" style="left:875.4px;top:811.5px;width:63.38px;height:6px;border-radius:3px;background:#236f55"></div>
<div class="t" style="left:977.8px;top:804.30px;font-size:12px;line-height:20px;height:20px;letter-spacing:0.1px;transform:none;">67%</div>
<div class="t" style="left:1028.6px;top:804.80px;font-size:14px;line-height:20px;height:20px;">1</div>
<div class="t" style="left:1167.6px;top:804.80px;font-size:14px;line-height:20px;height:20px;">1</div>
<svg class="i" style="left:1306px;top:801.5px;width:27px;height:27px;" viewBox="0 0 27 27"><circle cx="13.5" cy="13.5" r="10.75" fill="none" stroke="#eeeeee" stroke-width="5.5"/><circle cx="13.5" cy="13.5" r="10.75" fill="none" stroke="#10a857" stroke-width="5.5" stroke-dasharray="67.544 67.544" transform="rotate(-90 13.5 13.5)"/></svg>
<div class="t" style="left:1348.1px;top:806.40px;font-size:14px;line-height:20px;height:20px;letter-spacing:0.2px;">100</div>
<div class="t" style="left:1455.7px;top:804.80px;font-size:14px;line-height:20px;height:20px;letter-spacing:-0.15px;">1.8K</div>
<div class="b" style="left:265px;top:898px;width:1310px;height:1px;background:#ececec"></div>
<div class="b" style="left:287px;top:862.7px;width:16.3px;height:16.3px;border:1.6px solid #1a1a1a;border-radius:1px"></div>
<div class="t" style="left:337.1px;top:860.90px;font-size:14px;line-height:20px;height:20px;color:#236f55;letter-spacing:0.39px;">Energy Shift</div>
<svg class="i" style="left:595px;top:857.5px;width:27px;height:27px;" viewBox="0 0 27 27"><circle cx="13.5" cy="13.5" r="10.75" fill="none" stroke="#eeeeee" stroke-width="5.5"/><circle cx="13.5" cy="13.5" r="10.75" fill="none" stroke="#f9bd0c" stroke-width="5.5" stroke-dasharray="27.693 67.544" transform="rotate(-90 13.5 13.5)"/></svg>
<div class="t" style="left:637.5px;top:862.20px;font-size:14px;line-height:20px;height:20px;letter-spacing:0.3px;">41</div>
<div class="t" style="left:682.6px;top:860.60px;font-size:14px;line-height:20px;height:20px;letter-spacing:0.42px;">+13 pts</div>
<svg class="i" style="left:737px;top:862.3px;width:12px;height:14.399999999999999px" viewBox="0 0 12 12" preserveAspectRatio="none"><path d="M6 0.3 Q8 3 9.8 5 Q11.5 7.2 10.8 9.2 Q9.8 12 6 12 Q2.2 12 1.2 9.2 Q0.6 7 2 5.2 Q2.2 6.6 3.2 7 Q2.6 3.6 6 0.3z" fill="#f0582a"/><path d="M6 4.5 Q8.6 7.2 8.4 9.3 Q8 11.6 6 11.6 Q4 11.6 3.6 9.6 Q3.5 7.6 6 4.5z" fill="#fbb13c"/><path d="M6 8 Q7.4 9.4 7.2 10.5 Q6.8 11.6 6 11.6 Q5.2 11.6 4.9 10.6 Q4.8 9.5 6 8z" fill="#fff3b0"/></svg>
<div class="t" style="left:780.3px;top:861.70px;font-size:14px;line-height:20px;height:20px;letter-spacing:0.64px;">No Owner</div>
<div class="b" style="left:875.4px;top:867.5px;width:94.6px;height:6px;border-radius:3px;background:#a9c8bb"></div>
<div class="b" style="left:875.4px;top:867.5px;width:63.38px;height:6px;border-radius:3px;background:#236f55"></div>
<div class="t" style="left:977.8px;top:860.30px;font-size:12px;line-height:20px;height:20px;letter-spacing:0.1px;transform:none;">67%</div>
<div class="t" style="left:1028.6px;top:860.80px;font-size:14px;line-height:20px;height:20px;">5</div>
<div class="t" style="left:1167.6px;top:860.80px;font-size:14px;line-height:20px;height:20px;">6</div>
<svg class="i" style="left:1306px;top:857.5px;width:27px;height:27px;" viewBox="0 0 27 27"><circle cx="13.5" cy="13.5" r="10.75" fill="none" stroke="#eeeeee" stroke-width="5.5"/><circle cx="13.5" cy="13.5" r="10.75" fill="none" stroke="#10a857" stroke-width="5.5" stroke-dasharray="56.062 67.544" transform="rotate(-90 13.5 13.5)"/></svg>
<div class="t" style="left:1348.1px;top:862.40px;font-size:14px;line-height:20px;height:20px;letter-spacing:0.2px;">83</div>
<div class="t" style="left:1455.7px;top:860.80px;font-size:14px;line-height:20px;height:20px;letter-spacing:-0.15px;">1.5K</div>
<div class="b" style="left:265px;top:954px;width:1310px;height:1px;background:#ececec"></div>
<div class="b" style="left:287px;top:918.7px;width:16.3px;height:16.3px;border:1.6px solid #1a1a1a;border-radius:1px"></div>
<div class="t" style="left:337.1px;top:916.90px;font-size:14px;line-height:20px;height:20px;color:#236f55;letter-spacing:0.56px;">Kingdom Vitality</div>
<svg class="i" style="left:595px;top:913.5px;width:27px;height:27px;" viewBox="0 0 27 27"><circle cx="13.5" cy="13.5" r="10.75" fill="none" stroke="#eeeeee" stroke-width="5.5"/><circle cx="13.5" cy="13.5" r="10.75" fill="none" stroke="#f9bd0c" stroke-width="5.5" stroke-dasharray="14.184 67.544" transform="rotate(-90 13.5 13.5)"/></svg>
<div class="t" style="left:637.5px;top:918.20px;font-size:14px;line-height:20px;height:20px;letter-spacing:0.3px;">21</div>
<div class="t" style="left:682.6px;top:916.60px;font-size:14px;line-height:20px;height:20px;letter-spacing:0.42px;">+18 pts</div>
<svg class="i" style="left:737px;top:918.3px;width:12px;height:14.399999999999999px" viewBox="0 0 12 12" preserveAspectRatio="none"><path d="M6 0.3 Q8 3 9.8 5 Q11.5 7.2 10.8 9.2 Q9.8 12 6 12 Q2.2 12 1.2 9.2 Q0.6 7 2 5.2 Q2.2 6.6 3.2 7 Q2.6 3.6 6 0.3z" fill="#f0582a"/><path d="M6 4.5 Q8.6 7.2 8.4 9.3 Q8 11.6 6 11.6 Q4 11.6 3.6 9.6 Q3.5 7.6 6 4.5z" fill="#fbb13c"/><path d="M6 8 Q7.4 9.4 7.2 10.5 Q6.8 11.6 6 11.6 Q5.2 11.6 4.9 10.6 Q4.8 9.5 6 8z" fill="#fff3b0"/></svg>
<div class="t" style="left:780.3px;top:917.70px;font-size:14px;line-height:20px;height:20px;letter-spacing:0.64px;">No Owner</div>
<div class="b" style="left:875.4px;top:923.5px;width:94.6px;height:6px;border-radius:3px;background:#a9c8bb"></div>
<div class="b" style="left:875.4px;top:923.5px;width:47.3px;height:6px;border-radius:3px;background:#236f55"></div>
<div class="t" style="left:977.8px;top:916.30px;font-size:12px;line-height:20px;height:20px;letter-spacing:0.1px;transform:none;">50%</div>
<div class="t" style="left:1028.6px;top:916.80px;font-size:14px;line-height:20px;height:20px;">1</div>
<div class="t" style="left:1167.6px;top:916.80px;font-size:14px;line-height:20px;height:20px;">1</div>
<svg class="i" style="left:1306px;top:913.5px;width:27px;height:27px;" viewBox="0 0 27 27"><circle cx="13.5" cy="13.5" r="10.75" fill="none" stroke="#eeeeee" stroke-width="5.5"/><circle cx="13.5" cy="13.5" r="10.75" fill="none" stroke="#10a857" stroke-width="5.5" stroke-dasharray="67.544 67.544" transform="rotate(-90 13.5 13.5)"/></svg>
<div class="t" style="left:1348.1px;top:918.40px;font-size:14px;line-height:20px;height:20px;letter-spacing:0.2px;">100</div>
<div class="t" style="left:1455.7px;top:916.80px;font-size:14px;line-height:20px;height:20px;letter-spacing:-0.15px;">678</div>
<div class="b" style="left:265px;top:1010px;width:1310px;height:1px;background:#ececec"></div>
<div class="b" style="left:287px;top:974.7px;width:16.3px;height:16.3px;border:1.6px solid #1a1a1a;border-radius:1px"></div>
<div class="t" style="left:337.1px;top:972.90px;font-size:14px;line-height:20px;height:20px;color:#236f55;letter-spacing:0.4px;">One Quantum</div>
<svg class="i" style="left:595px;top:969.5px;width:27px;height:27px;" viewBox="0 0 27 27"><circle cx="13.5" cy="13.5" r="10.75" fill="none" stroke="#eeeeee" stroke-width="5.5"/><circle cx="13.5" cy="13.5" r="10.75" fill="none" stroke="#f9bd0c" stroke-width="5.5" stroke-dasharray="14.184 67.544" transform="rotate(-90 13.5 13.5)"/></svg>
<div class="t" style="left:637.5px;top:974.20px;font-size:14px;line-height:20px;height:20px;letter-spacing:0.3px;">21</div>
<div class="t" style="left:682.6px;top:972.60px;font-size:14px;line-height:20px;height:20px;letter-spacing:0.42px;">+21 pts</div>
<svg class="i" style="left:737px;top:974.3px;width:12px;height:14.399999999999999px" viewBox="0 0 12 12" preserveAspectRatio="none"><path d="M6 0.3 Q8 3 9.8 5 Q11.5 7.2 10.8 9.2 Q9.8 12 6 12 Q2.2 12 1.2 9.2 Q0.6 7 2 5.2 Q2.2 6.6 3.2 7 Q2.6 3.6 6 0.3z" fill="#f0582a"/><path d="M6 4.5 Q8.6 7.2 8.4 9.3 Q8 11.6 6 11.6 Q4 11.6 3.6 9.6 Q3.5 7.6 6 4.5z" fill="#fbb13c"/><path d="M6 8 Q7.4 9.4 7.2 10.5 Q6.8 11.6 6 11.6 Q5.2 11.6 4.9 10.6 Q4.8 9.5 6 8z" fill="#fff3b0"/></svg>
<div class="t" style="left:780.3px;top:973.70px;font-size:14px;line-height:20px;height:20px;letter-spacing:0.64px;">No Owner</div>
<div class="b" style="left:875.4px;top:979.5px;width:94.6px;height:6px;border-radius:3px;background:#a9c8bb"></div>
<div class="b" style="left:875.4px;top:979.5px;width:31.22px;height:6px;border-radius:3px;background:#236f55"></div>
<div class="t" style="left:977.8px;top:972.30px;font-size:12px;line-height:20px;height:20px;letter-spacing:0.1px;transform:none;">33%</div>
<div class="t" style="left:1028.6px;top:972.80px;font-size:14px;line-height:20px;height:20px;">2</div>
<div class="t" style="left:1167.6px;top:972.80px;font-size:14px;line-height:20px;height:20px;">4</div>
<svg class="i" style="left:1306px;top:969.5px;width:27px;height:27px;" viewBox="0 0 27 27"><circle cx="13.5" cy="13.5" r="10.75" fill="none" stroke="#eeeeee" stroke-width="5.5"/><circle cx="13.5" cy="13.5" r="10.75" fill="none" stroke="#f9bd0c" stroke-width="5.5" stroke-dasharray="33.772 67.544" transform="rotate(-90 13.5 13.5)"/></svg>
<div class="t" style="left:1348.1px;top:974.40px;font-size:14px;line-height:20px;height:20px;letter-spacing:0.2px;">50</div>
<div class="t" style="left:1455.7px;top:972.80px;font-size:14px;line-height:20px;height:20px;letter-spacing:-0.15px;">660</div>
<div class="b" style="left:1532px;top:932px;width:48px;height:48px;border-radius:24px;background:#236f55;box-shadow:0 2px 12px rgba(0,0,0,0.14)"></div>
<svg class="i" style="left:1543.5px;top:944.5px;width:25px;height:23px;" viewBox="0 0 25 23"><path d="M12.5 0.4 Q10.7 0.4 9.5 2.3 L1.1 15.6 Q-0.5 18.8 1.5 21.1 Q3.3 23 6 22.3 Q7.8 21.8 9 20.2 L12.5 16.6 L15 20 L23.6 15.6 L15.5 2.3 Q14.3 0.4 12.5 0.4 Z" fill="#fff"/><circle cx="19.1" cy="17.7" r="4.5" fill="#236f55" stroke="#fff" stroke-width="1.05"/></svg>

</body></html>
